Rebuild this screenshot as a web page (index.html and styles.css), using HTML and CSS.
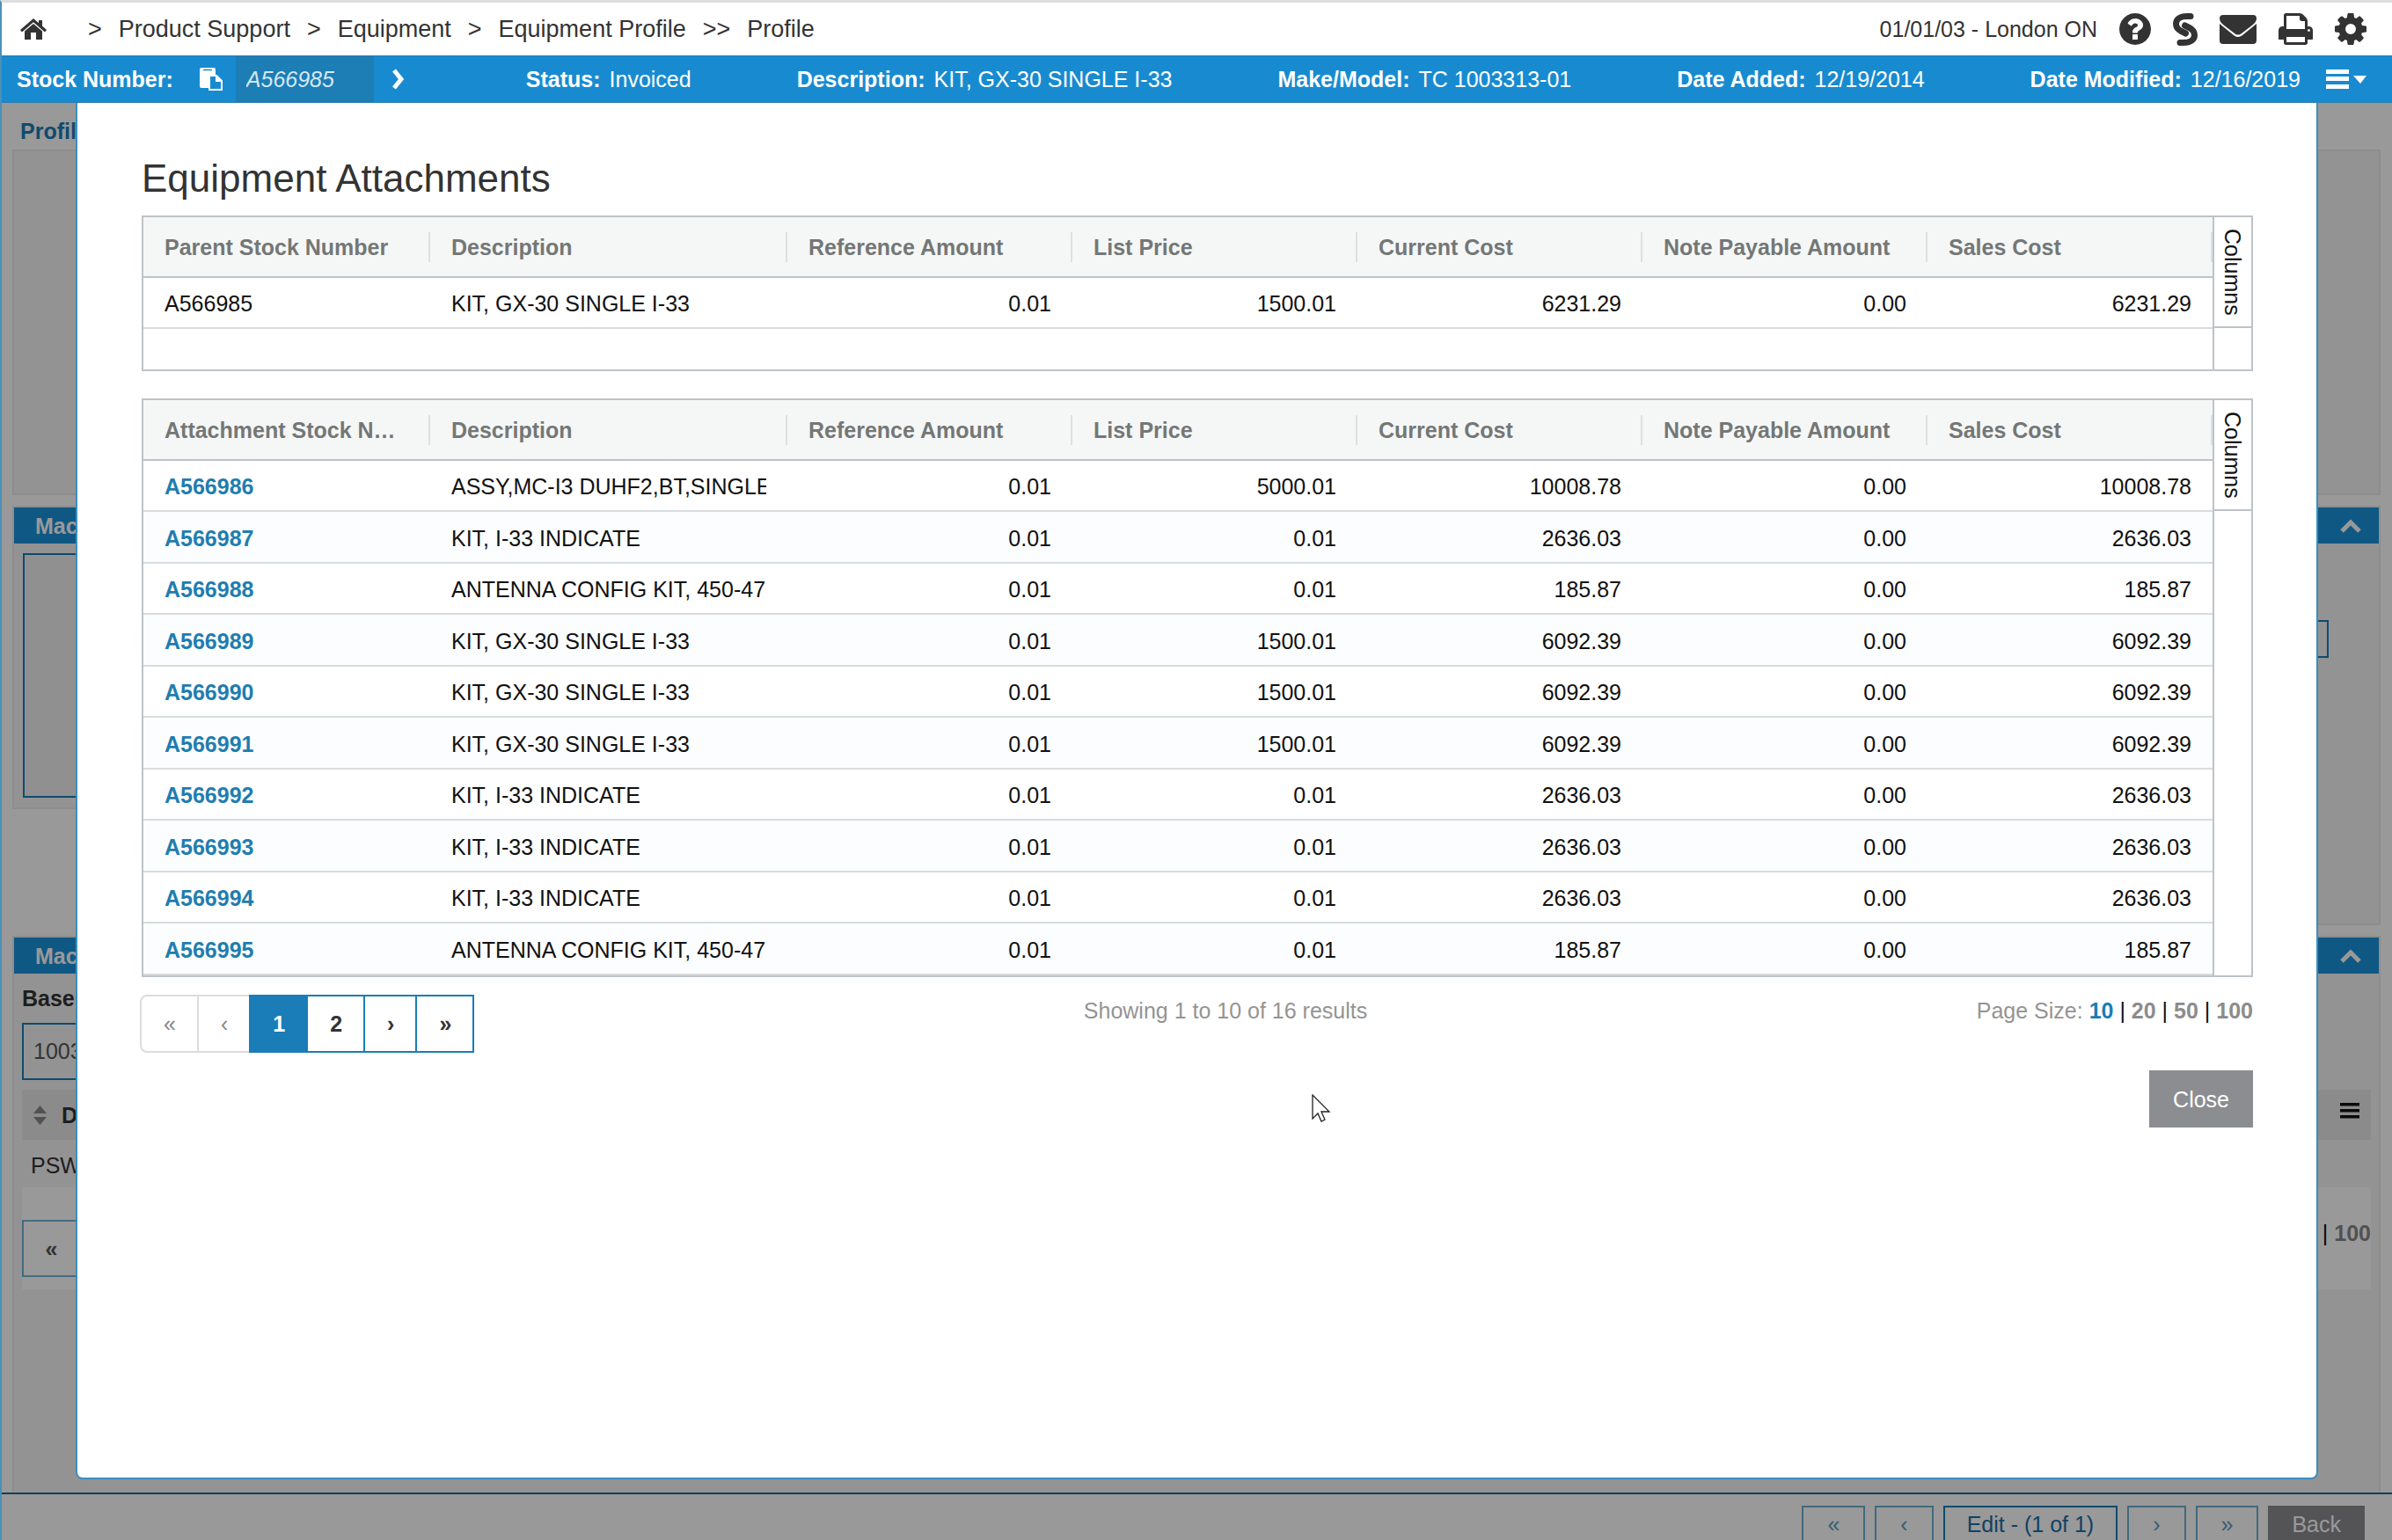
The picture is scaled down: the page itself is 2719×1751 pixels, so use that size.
FILE: index.html
```html
<!DOCTYPE html>
<html lang="en">
<head>
    <meta charset="UTF-8">
    <meta name="viewport" content="width=device-width, initial-scale=1.0">
    <title>Equipment Profile</title>
    <link rel="stylesheet" href="styles.css">
</head>
<body>
    <div class="app">
        <header class="topbar">
            <nav class="breadcrumb" aria-label="Breadcrumb">
                <a href="#" class="home" aria-label="Home">
                    <svg width="30" height="24" viewBox="0 0 30 24"><path d="M15 0L0 13l2 2.400L15 4.200l13 11.200 2-2.400-5-4.400V2h-4v3.200z"/><path d="M15 6L5 14.600V24h7v-8h6v8h7v-9.400z"/></svg>
                </a>
                <span>&gt;</span>
                <a href="#">Product Support</a>
                <span>&gt;</span>
                <a href="#">Equipment</a>
                <span>&gt;</span>
                <a href="#">Equipment Profile</a>
                <span>&gt;&gt;</span>
                <a href="#">Profile</a>
            </nav>
            <div class="tools">
                <span>01/01/03 - London ON</span>
                <button type="button" class="icon-button" aria-label="Help">
                    <svg width="36" height="36" viewBox="128 128 1536 1536"><path d="M1024 1376v-192q0-14-9-23t-23-9h-192q-14 0-23 9t-9 23v192q0 14 9 23t23 9h192q14 0 23-9t9-23zm256-672q0-88-55.500-163t-138.500-116-170-41q-243 0-371 213-15 24 8 42l132 100q7 6 19 6 16 0 25-12 53-68 86-92 34-24 86-24 48 0 85.500 26t37.500 59q0 38-20 61t-68 45q-63 28-115.500 86.500t-52.500 125.500v36q0 14 9 23t23 9h192q14 0 23-9t9-23q0-19 21.500-49.500t54.500-49.500q32-18 49-28.500t46-35 44.500-48 28-60.500 12.500-81zm384 192q0 209-103 385.500t-279.500 279.500-385.500 103-385.500-103-279.500-279.500-103-385.500 103-385.500 279.500-279.500 385.500-103 385.500 103 279.500 279.500 103 385.500z"/></svg>
                </button>
                <button type="button" class="icon-button" aria-label="Support">
                    <svg width="28" height="37" viewBox="0 0 28 37" fill="none" stroke="#333" stroke-width="7" stroke-linecap="round"><path d="M20 3.500h-4C8 3.500 3.500 7 3.500 12c0 4 2 6.500 6 8.500l5 2.500"/><path d="M8 33.500h4c8 0 12.500-3.500 12.500-8.500 0-4-2-6.500-6-8.500L13.500 14"/></svg>
                </button>
                <button type="button" class="icon-button" aria-label="Mail">
                    <svg width="42" height="33" viewBox="0 0 42 33"><path d="M4 0h34q4 0 4 4c0 3-2 5-4 7L25 21q-4 3-8 0L4 11C2 9 0 7 0 4q0-4 4-4z"/><path d="M0 10l16 13q5 4 10 0l16-13v19q0 4-4 4H4q-4 0-4-4z"/></svg>
                </button>
                <button type="button" class="icon-button" aria-label="Print">
                    <svg width="39" height="36" viewBox="64 128 1664 1536"><path d="M448 1536h896v-256h-896v256zm0-640h896v-384h-160q-40 0-68-28t-28-68v-160h-640v640zm1152 64q0-26-19-45t-45-19-45 19-19 45 19 45 45 19 45-19 19-45zm128 0v416q0 13-9.500 22.500t-22.500 9.500h-224v160q0 40-28 68t-68 28h-960q-40 0-68-28t-28-68v-160h-224q-13 0-22.500-9.500t-9.500-22.500v-416q0-79 56.500-135.500t135.500-56.500h64v-544q0-40 28-68t68-28h672q40 0 88 20t76 48l152 152q28 28 48 76t20 88v256h64q79 0 135.500 56.500t56.500 135.500z"/></svg>
                </button>
                <button type="button" class="icon-button" aria-label="Settings">
                    <svg width="36" height="36" viewBox="128 128 1536 1536"><path d="M1152 896q0-106-75-181t-181-75-181 75-75 181 75 181 181 75 181-75 75-181zm512-109v222q0 12-8 23t-20 13l-185 28q-19 54-39 91 35 50 107 138 10 12 10 25t-9 23q-27 37-99 108t-94 71q-12 0-26-9l-138-108q-44 23-91 38-16 136-29 186-7 28-36 28h-222q-14 0-24.500-8.500t-11.500-21.500l-28-184q-49-16-90-37l-141 107q-10 9-25 9-14 0-25-11-126-114-165-168-7-10-7-23 0-12 8-23 15-21 51-66.500t54-70.500q-27-50-41-99l-183-27q-13-2-21-12.500t-8-23.500v-222q0-12 8-23t19-13l186-28q14-46 39-92-40-57-107-138-10-12-10-24 0-10 9-23 26-36 98.500-107.500t94.500-71.500q13 0 26 10l138 107q44-23 91-38 16-136 29-186 7-28 36-28h222q14 0 24.500 8.500t11.500 21.500l28 184q49 16 90 37l142-107q9-9 24-9 13 0 25 10 129 119 165 170 7 8 7 22 0 12-8 23-15 21-51 66.500t-54 70.500q26 50 41 98l183 28q13 2 21 12.500t8 23.500z"/></svg>
                </button>
            </div>
        </header>

        <div class="stockbar">
            <label for="stock">Stock Number:</label>
            <button type="button" class="icon-button copy" aria-label="Copy stock number">
                <svg width="26" height="26" viewBox="0 0 26 26" fill="#fff"><path d="M0 2q0-2 2-2h14q2 0 2 2v6h-8v15H2q-2 0-2-2z"/><path d="M4 2.500h10" stroke="#188bd0" stroke-width="1.500"/><path d="M11 9h8l6 6v10H11z" fill="#188bd0" stroke="#fff" stroke-width="2"/><path d="M18 9v7h7l-6-7z" fill="#fff"/></svg>
            </button>
            <input type="text" id="stock" class="stock-input" value="A566985">
            <button type="button" class="icon-button next" aria-label="Next">
                <svg width="16" height="24" viewBox="0 0 16 24" fill="none" stroke="#fff" stroke-width="5"><path d="M3 2l8 10-8 10"/></svg>
            </button>
            <div class="facts">
                <div class="fact"><b>Status:</b><span>Invoiced</span></div>
                <div class="fact"><b>Description:</b><span>KIT, GX-30 SINGLE I-33</span></div>
                <div class="fact"><b>Make/Model:</b><span>TC 1003313-01</span></div>
                <div class="fact"><b>Date Added:</b><span>12/19/2014</span></div>
                <div class="fact"><b>Date Modified:</b><span>12/16/2019</span></div>
            </div>
            <button type="button" class="icon-button" aria-label="Menu">
                <svg width="46" height="22" viewBox="0 0 46 22" fill="#fff"><path d="M0 0h26v5H0zM0 8h26v5H0zM0 17h26v5H0zM31 7h15l-7 9z"/></svg>
            </button>
        </div>

        <div class="workspace">
            <main class="page">
                <h1 class="tab">Profile</h1>
                <section class="panel summary"></section>
                <div class="columns">
                    <section class="panel">
                        <div class="panel-head"><h2>Mac</h2></div>
                        <div class="panel-body"><textarea class="notes" aria-label="Notes"></textarea></div>
                    </section>
                    <section class="panel panel-tall">
                        <div class="panel-head">
                            <button type="button" class="icon-button" aria-label="Collapse"><svg width="24" height="16" viewBox="0 0 24 16" fill="none" stroke="#fff" stroke-width="5"><path d="M2 14L12 4l10 10"/></svg></button>
                        </div>
                        <div class="panel-body fields"><input type="text" class="field" aria-label="Value"></div>
                    </section>
                </div>
                <section class="panel panel-last">
                    <div class="panel-head">
                        <h2>Mac</h2>
                        <button type="button" class="icon-button" aria-label="Collapse"><svg width="24" height="16" viewBox="0 0 24 16" fill="none" stroke="#fff" stroke-width="5"><path d="M2 14L12 4l10 10"/></svg></button>
                    </div>
                    <div class="panel-base">
                        <label for="base">Base</label>
                        <input type="text" id="base" class="base-input" value="1003">
                        <div class="list-head">
                            <svg width="15" height="22" viewBox="0 0 15 22" fill="#888"><path d="M0 9l7.500-9L15 9zM0 13h15l-7.500 9z"/></svg>
                            <b>D</b>
                            <svg class="list-menu" width="22" height="18" viewBox="0 0 22 18" fill="#111"><path d="M0 0h22v3.500H0zM0 7h22v3.500H0zM0 14h22v3.500H0z"/></svg>
                        </div>
                        <div class="list-row">PSW</div>
                        <div class="list-foot">
                            <button type="button">«</button>
                            <span>| <b>100</b></span>
                        </div>
                    </div>
                </section>
            </main>
            <footer class="actions">
                <button type="button" class="nav">«</button>
                <button type="button" class="nav">‹</button>
                <button type="button" class="edit">Edit - (1 of 1)</button>
                <button type="button" class="nav">›</button>
                <button type="button" class="nav">»</button>
                <button type="button" class="back">Back</button>
            </footer>

            <div class="overlay">
                <div class="modal" role="dialog" aria-labelledby="modal-title">
                    <h2 class="modal-title" id="modal-title">Equipment Attachments</h2>

                    <div class="grid grid-parent">
                        <table>
                            <colgroup><col class="col-stock"><col class="col-desc"><col span="5"></colgroup>
                            <thead>
                                <tr><th>Parent Stock Number</th><th>Description</th><th>Reference Amount</th><th>List Price</th><th>Current Cost</th><th>Note Payable Amount</th><th>Sales Cost</th></tr>
                            </thead>
                            <tbody>
                                <tr><td>A566985</td><td><div>KIT, GX-30 SINGLE I-33</div></td><td>0.01</td><td>1500.01</td><td>6231.29</td><td>0.00</td><td>6231.29</td></tr>
                            </tbody>
                        </table>
                        <div class="side"><button type="button">Columns</button></div>
                    </div>

                    <div class="grid">
                        <table>
                            <colgroup><col class="col-stock"><col class="col-desc"><col span="5"></colgroup>
                            <thead>
                                <tr><th>Attachment Stock N…</th><th>Description</th><th>Reference Amount</th><th>List Price</th><th>Current Cost</th><th>Note Payable Amount</th><th>Sales Cost</th></tr>
                            </thead>
                            <tbody>
                                <tr><td><a href="#">A566986</a></td><td><div>ASSY,MC-I3 DUHF2,BT,SINGLE</div></td><td>0.01</td><td>5000.01</td><td>10008.78</td><td>0.00</td><td>10008.78</td></tr>
                                <tr><td><a href="#">A566987</a></td><td><div>KIT, I-33 INDICATE</div></td><td>0.01</td><td>0.01</td><td>2636.03</td><td>0.00</td><td>2636.03</td></tr>
                                <tr><td><a href="#">A566988</a></td><td><div>ANTENNA CONFIG KIT, 450-47</div></td><td>0.01</td><td>0.01</td><td>185.87</td><td>0.00</td><td>185.87</td></tr>
                                <tr><td><a href="#">A566989</a></td><td><div>KIT, GX-30 SINGLE I-33</div></td><td>0.01</td><td>1500.01</td><td>6092.39</td><td>0.00</td><td>6092.39</td></tr>
                                <tr><td><a href="#">A566990</a></td><td><div>KIT, GX-30 SINGLE I-33</div></td><td>0.01</td><td>1500.01</td><td>6092.39</td><td>0.00</td><td>6092.39</td></tr>
                                <tr><td><a href="#">A566991</a></td><td><div>KIT, GX-30 SINGLE I-33</div></td><td>0.01</td><td>1500.01</td><td>6092.39</td><td>0.00</td><td>6092.39</td></tr>
                                <tr><td><a href="#">A566992</a></td><td><div>KIT, I-33 INDICATE</div></td><td>0.01</td><td>0.01</td><td>2636.03</td><td>0.00</td><td>2636.03</td></tr>
                                <tr><td><a href="#">A566993</a></td><td><div>KIT, I-33 INDICATE</div></td><td>0.01</td><td>0.01</td><td>2636.03</td><td>0.00</td><td>2636.03</td></tr>
                                <tr><td><a href="#">A566994</a></td><td><div>KIT, I-33 INDICATE</div></td><td>0.01</td><td>0.01</td><td>2636.03</td><td>0.00</td><td>2636.03</td></tr>
                                <tr><td><a href="#">A566995</a></td><td><div>ANTENNA CONFIG KIT, 450-47</div></td><td>0.01</td><td>0.01</td><td>185.87</td><td>0.00</td><td>185.87</td></tr>
                            </tbody>
                        </table>
                        <div class="side"><button type="button">Columns</button></div>
                    </div>

                    <div class="grid-foot">
                        <div class="pager">
                            <button type="button" disabled>«</button>
                            <button type="button" disabled>‹</button>
                            <button type="button" class="active">1</button>
                            <button type="button">2</button>
                            <button type="button">›</button>
                            <button type="button">»</button>
                        </div>
                        <div class="muted">Showing 1 to 10 of 16 results</div>
                        <div class="page-size">
                            <span class="muted">Page Size:</span>
                            <a href="#" class="active">10</a> | <a href="#">20</a> | <a href="#">50</a> | <a href="#">100</a>
                        </div>
                    </div>

                    <div class="modal-actions">
                        <button type="button" class="close">Close</button>
                    </div>

                    <svg class="cursor" width="22" height="33" viewBox="0 0 22 33" fill="#fff" stroke="#222" stroke-width="1.300"><path d="M1 1v27l6-6 4 9 4-2-4-9h9z"/></svg>
                </div>
            </div>
        </div>
        <div class="drawer-handle"></div>
    </div>
</body>
</html>
```
FILE: styles.css
```css
* {
    box-sizing: border-box;
}

body {
    margin: 0;
    font-family: "Liberation Sans", Arial, sans-serif;
    font-size: 25px;
    line-height: 30px;
    color: #333;
    background: #fff;
}

h1, h2 {
    margin: 0;
    font-size: 25px;
}

a {
    color: inherit;
    text-decoration: none;
}

button, input, textarea {
    font: inherit;
    color: inherit;
    margin: 0;
}

svg {
    display: block;
}

.app {
    position: relative;
    display: flex;
    flex-direction: column;
    height: 100vh;
    overflow: hidden;
    border-top: 3px solid #dedede;
    border-left: 2px solid #4a90b8;
}

.drawer-handle {
    position: absolute;
    left: -2px;
    top: 355px;
    width: 2px;
    height: 83px;
    background: #1583cc;
}

.icon-button {
    padding: 0;
    border: 0;
    background: none;
    cursor: pointer;
}

.icon-button svg {
    overflow: visible;
}

/* Top bar */
.topbar {
    display: flex;
    justify-content: space-between;
    align-items: center;
    height: 60px;
    padding: 0 29px 0 21px;
    fill: #333;
}

.breadcrumb {
    display: flex;
    align-items: center;
    gap: 19px;
    font-size: 27px;
}

.home {
    margin-right: 28px;
}

.tools {
    display: flex;
    align-items: center;
    gap: 25px;
}

/* Stock bar */
.stockbar {
    display: flex;
    align-items: center;
    height: 54px;
    padding: 0 29px 0 17px;
    background: #188bd0;
    border-top: 1px solid #2a7db0;
    border-bottom: 1px solid #2a7db0;
    color: #fff;
}

.stockbar label {
    font-weight: bold;
}

.copy {
    margin: 0 15px 0 30px;
}

.stock-input {
    width: 157px;
    height: 52px;
    padding: 0 12px;
    border: 0;
    background: #1d7db5;
    color: #d3e8f5;
    font-style: italic;
}

.next {
    margin-left: 20px;
}

.facts {
    display: flex;
    flex: 1;
    justify-content: space-between;
    margin: 0 29px 0 137px;
}

.fact {
    display: flex;
    gap: 10px;
}

/* Page behind the dialog */
.workspace {
    position: relative;
    display: flex;
    flex: 1;
    flex-direction: column;
    min-height: 0;
}

.page {
    display: flex;
    flex: 1;
    flex-direction: column;
    min-height: 0;
    padding: 17px 13px 0 12px;
}

.tab {
    margin: 0 0 6px 9px;
    color: #1a7db8;
}

.panel {
    background: #f5f5f5;
    border: 2px solid #ebebeb;
}

.summary {
    height: 393px;
    flex-shrink: 0;
}

.columns {
    display: grid;
    grid-template-columns: 1fr 1fr;
    align-items: start;
    margin: 12px 0;
}

.panel-head {
    display: flex;
    align-items: center;
    height: 41px;
    padding: 0 20px 0 24px;
    background: #1c93dc;
    color: #fff;
}

.panel-head .icon-button {
    margin-left: auto;
}

.panel-body {
    padding: 11px 10px;
}

.notes {
    display: block;
    width: 100%;
    height: 278px;
    border: 2px solid #1a7db8;
    background: #f0f0f0;
    resize: none;
}

.panel-tall {
    height: 477px;
}

.fields {
    padding: 87px 57px 0 10px;
}

.field {
    display: block;
    width: 100%;
    height: 43px;
    border: 2px solid #1a7db8;
    background: #f5f5f5;
}

.panel-last {
    flex: 1;
    border-bottom: 0;
}

.panel-base {
    padding: 13px 9px 0;
}

.panel-base label {
    display: block;
    font-weight: bold;
    margin-bottom: 13px;
}

.base-input {
    display: block;
    width: 400px;
    height: 65px;
    padding: 0 11px;
    border: 2px solid #1a7db8;
    background: #f5f5f5;
    color: #555;
}

.list-head {
    display: flex;
    align-items: center;
    gap: 17px;
    height: 57px;
    margin-top: 11px;
    padding: 0 13px;
    background: #e8e8e8;
}

.list-menu {
    margin: 0 0 10px auto;
}

.list-row {
    height: 54px;
    padding: 14px 10px;
}

.list-foot {
    display: flex;
    justify-content: space-between;
    height: 116px;
    padding-top: 37px;
    background: #fff;
    color: #111;
}

.list-foot b {
    color: #888;
}

.list-foot button {
    width: 67px;
    height: 65px;
    border: 2px solid #70b4d8;
    background: #fff;
    color: #555;
    font-weight: bold;
}

.actions {
    display: flex;
    gap: 11px;
    justify-content: flex-end;
    height: 54px;
    flex-shrink: 0;
    padding: 13px 31px 0 0;
    border-top: 2px solid #1f6a96;
}

.actions button {
    height: 41px;
    padding: 0 27px;
    border: 2px solid #6fb0d0;
    background: #fff;
    color: #5a9fc4;
}

.actions .edit {
    padding: 0 25px;
    border-color: #1a7db8;
    color: #1a6fa5;
}

.actions .back {
    padding: 0 25px;
    border-color: #8c8d91;
    background: #8c8d91;
    color: #fff;
}

/* Dialog */
.overlay {
    position: absolute;
    inset: 0;
    display: flex;
    padding: 0 84px 69px;
    background: rgba(0, 0, 0, 0.4);
}

.modal {
    position: relative;
    flex: 1;
    min-width: 0;
    padding: 61px 72px 0 73px;
    border: 2px solid #3a8fc0;
    border-top: 0;
    border-radius: 0 0 8px 8px;
    background: #fff;
}

.modal-title {
    margin-bottom: 17px;
    font-size: 44px;
    font-weight: normal;
    line-height: 50px;
}

.grid {
    display: flex;
    border: 2px solid #bdc3c7;
    color: #111;
}

.grid-parent {
    min-height: 177px;
    margin-bottom: 31px;
}

.grid table {
    flex: 1;
    align-self: flex-start;
    width: 100%;
    min-width: 0;
    table-layout: fixed;
    border-collapse: separate;
    border-spacing: 0;
}

.col-stock {
    width: 326px;
}

.col-desc {
    width: 406px;
}

.grid th {
    height: 69px;
    padding: 0 24px;
    border-bottom: 2px solid #bdc3c7;
    background: #f5f7f7 linear-gradient(#dde0e2, #dde0e2) no-repeat right center / 2px 34px;
    color: #747776;
    text-align: left;
    white-space: nowrap;
}

.grid td {
    height: 58px;
    padding: 2px 24px 0;
    border-bottom: 2px solid #d9dcde;
    text-align: right;
    white-space: nowrap;
}

.grid td:nth-child(-n+2) {
    text-align: left;
}

.grid td div {
    overflow: hidden;
}

.grid tbody tr:nth-child(even) td {
    height: 59px;
    background: #fbfdfe;
}

.grid td a {
    color: #1f7db0;
    font-weight: bold;
}

.side {
    flex: 0 0 44px;
    border-left: 2px solid #bdc3c7;
}

.side button {
    width: 100%;
    height: 126px;
    padding: 0;
    border: 0;
    border-bottom: 2px solid #bdc3c7;
    background: #fff;
    writing-mode: vertical-rl;
}

.grid-foot {
    display: flex;
    justify-content: space-between;
    align-items: flex-start;
    margin-top: 20px;
    line-height: 36px;
}

.pager {
    display: flex;
    margin-left: -2px;
}

.pager button {
    height: 66px;
    padding: 0 24px 0 25px;
    border: 2px solid #1a7db8;
    background: #fff;
    color: #333;
    font-weight: bold;
}

.pager button + button {
    margin-left: -2px;
}

.pager button:disabled {
    border-color: #dcdcdc;
    color: #888;
    font-weight: normal;
}

.pager button:first-child {
    border-radius: 8px 0 0 8px;
}

.pager .active {
    position: relative;
    background: #1a7db8;
    color: #fff;
}

.muted {
    color: #949494;
}

.page-size {
    color: #111;
}

.page-size a {
    color: #8c8c8c;
    font-weight: bold;
}

.page-size .active {
    color: #1a7db8;
}

.modal-actions {
    display: flex;
    justify-content: flex-end;
    margin-top: 20px;
}

.close {
    height: 65px;
    padding: 0 27px;
    border: 0;
    background: #8c8d91;
    color: #fff;
}

.cursor {
    position: absolute;
    left: 1403px;
    top: 1127px;
}
```
